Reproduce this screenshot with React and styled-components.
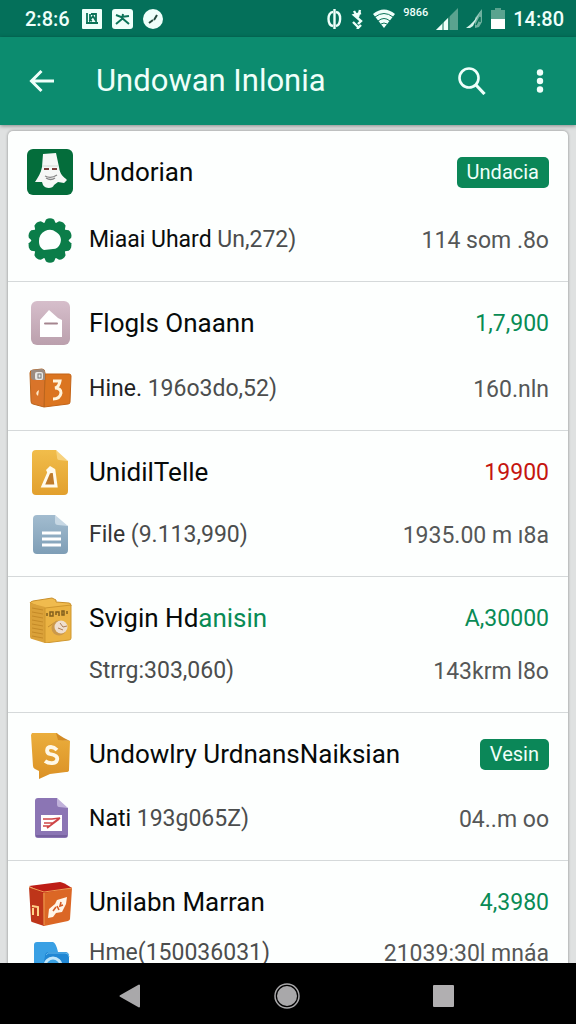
import styled, { createGlobalStyle } from "styled-components";

const GlobalStyle = createGlobalStyle`
  * {
    box-sizing: border-box;
  }

  body {
    margin: 0;
    background: #000;
    font-family: Roboto, "Liberation Sans", sans-serif;
  }

  button {
    border: 0;
    padding: 0;
    background: none;
    color: inherit;
    font: inherit;
    cursor: pointer;
  }
`;

/* Status bar */

const StatusIcons = () => (
  <StatusGroup $gap={10}>
    <svg width="20" height="20" viewBox="0 0 20 20">
      <rect width="20" height="20" rx="1" fill="#effffa" />
      <path
        d="M5 4v10M4 14h12M8 5v6l3-4 3 5V5H9M7 11l3 1"
        fill="none"
        stroke="#0b7358"
        strokeWidth="1.8"
      />
    </svg>
    <svg width="21" height="20" viewBox="0 0 21 20">
      <rect width="21" height="20" rx="3" fill="#effffa" />
      <path
        d="M4 6l5 2 8-1M11 5l-1 5-6 5M10 9l7 6"
        fill="none"
        stroke="#0b7358"
        strokeWidth="2"
      />
    </svg>
    <svg width="20" height="20" viewBox="0 0 20 20">
      <circle cx="10" cy="10" r="10" fill="#effffa" />
      <path
        d="M14 6l-3 5M10 11l-4 3"
        fill="none"
        stroke="#24483c"
        strokeWidth="2"
      />
    </svg>
  </StatusGroup>
);

const SystemIcons = () => (
  <>
    <svg width="15" height="20" viewBox="0 0 15 20">
      <path
        d="M6 3C0 3 0 16 6 17M9 3c6 1 5 13 0 14M7.500 0v20"
        fill="none"
        stroke="#effffa"
        strokeWidth="2.400"
      />
    </svg>
    <svg width="15" height="20" viewBox="0 0 15 20">
      <path
        d="M11 4L4 6l7 6-3 3M4 2l3 5M10 1L8 8M3 13l5 5M7 20l4-4"
        fill="none"
        stroke="#effffa"
        strokeWidth="2.400"
      />
    </svg>
    <svg width="22" height="20" viewBox="0 0 22 20">
      <path d="M0 5Q11-4 22 5L11 19Z" fill="#effffa" />
      <path
        d="M2 8Q11 1 20 8M5 12Q11 7 17 12M8 15Q11 13 14 15"
        fill="none"
        stroke="#0b7358"
        strokeWidth="1"
      />
    </svg>
    <Carrier>9866</Carrier>
    <svg width="22" height="22" viewBox="0 0 22 22">
      <path d="M0 22L22 0v22Z" fill="#5aa38f" />
      <path d="M0 22L12 10v12Z" fill="#effffa" />
      <path d="M7 22V14M13 22V8" stroke="#0b7358" strokeWidth="1" />
    </svg>
    <svg width="17" height="21" viewBox="0 0 17 21">
      <path d="M16 1L9 10v10l4-1 3-5Z" fill="#6fb09f" />
      <path d="M0 20Q9 14 15 2L7 18 4 20Z" fill="#d5f2e9" />
      <path d="M10 17l4-8v5" fill="none" stroke="#0b7358" strokeWidth="1.500" />
    </svg>
    <svg width="14" height="21" viewBox="0 0 14 21">
      <path d="M4 0h6v2h4v9H0V2h4Z" fill="#5aa38f" />
      <path d="M0 11h14v10H0Z" fill="#fff" />
    </svg>
  </>
);

/* Row icons */

const IconBase = ({ children }) => (
  <svg width="46" height="50" viewBox="0 0 46 50" aria-hidden="true">
    {children}
  </svg>
);

const PortraitIcon = () => (
  <IconBase>
    <rect y="2" width="46" height="46" rx="6" fill="#046d3b" />
    <path
      d="M16 7l13-1 3 14c1 8 4 9 8 13l-3 3-6-1-4 3c-1 4-9 4-11 0l-1-3-7 0c3-5 6-9 7-15Z"
      fill="#f6f8f6"
    />
    <path d="M17 22h5M25 22h5" stroke="#7b3d3a" strokeWidth="2.200" />
    <path
      d="M18 29q6 3 12-1M19 31q5 3 9 0"
      fill="none"
      stroke="#858585"
      strokeWidth="1.300"
    />
    <path d="M15 19h16" stroke="#d3dad4" strokeWidth="1" />
  </IconBase>
);

const GearIcon = () => (
  <IconBase>
    {[0, 36, 72, 108, 144].map((angle) => (
      <path
        key={angle}
        d="M19 4.500Q23 2 27 4.500L30 11V40L27 46.500Q23 49 19 46.500L16 40V11Z"
        fill="#0b7d49"
        transform={`rotate(${angle} 23 25.500)`}
      />
    ))}
    <circle cx="23" cy="25.500" r="18.500" fill="#0b7d49" />
    <path
      d="M18 16q6-3 11 1c5 3 6 8 4 12q-2 5-7 5l-9 1c-4-2-5-5-5-9q0-7 6-10Z"
      fill="#fdfffe"
    />
  </IconBase>
);

const HouseIcon = () => (
  <IconBase>
    <defs>
      <linearGradient id="mauve" x2="0" y2="1">
        <stop stopColor="#d6becb" />
        <stop offset="1" stopColor="#bba0ad" />
      </linearGradient>
    </defs>
    <rect x="4" y="3" width="39" height="44" rx="6" fill="url(#mauve)" />
    <path d="M22 12l9 8 4 2v17H13V22Z" fill="#fff" />
    <path
      d="M18 25.500h12"
      stroke="#a5858f"
      strokeWidth="2"
      strokeLinecap="round"
    />
  </IconBase>
);

const FolderIcon = () => (
  <IconBase>
    <path
      d="M18 10l24 0q2 0 2 2l-1 26q0 2-2 2l-24 3Z"
      fill="#db7520"
      stroke="#c36316"
    />
    <path
      d="M3 9q0-3 3-3l9-1q3 0 3 4l-1 34-11-3q-2 0-2-3Z"
      fill="#d9742a"
      stroke="#ba651d"
    />
    <path d="M4 6l11-1q3 0 3 4v7H7q-3 0-3-3Z" fill="#9b8b80" />
    <rect x="8" y="8" width="8" height="8" rx="2" fill="#e9e8e5" />
    <rect x="11" y="10" width="3" height="4" fill="none" stroke="#777" />
    <path d="M12 26q-5 3-1 6Z" fill="#ffe9c8" />
    <path
      d="M26 17h7q-1 6-5 7 6 0 6 5-1 6-8 6"
      fill="none"
      stroke="#fff4db"
      strokeWidth="3"
    />
  </IconBase>
);

const NoteIcon = () => (
  <IconBase>
    <defs>
      <linearGradient id="amber" x2="0" y2="1">
        <stop stopColor="#f1bd4b" />
        <stop offset="1" stopColor="#e2a02d" />
      </linearGradient>
    </defs>
    <path
      d="M9 3h20l5 8 7 3v30q0 4-4 4H9q-4 0-4-4V7q0-4 4-4Z"
      fill="url(#amber)"
    />
    <path d="M29 3l12 11-9-1q-2 0-2-3Z" fill="#f7d27d" />
    <path d="M19 23l4-4 5 3v5h-7Z" fill="#fffbed" />
    <path
      d="M22 25l-6 14h13l-2-15Z"
      fill="#bf7b2b"
      stroke="#fffbed"
      strokeWidth="3"
    />
  </IconBase>
);

const DocumentIcon = () => (
  <IconBase>
    <defs>
      <linearGradient id="steel" x2="0" y2="1">
        <stop stopColor="#a2bccf" />
        <stop offset="1" stopColor="#7e9eb6" />
      </linearGradient>
    </defs>
    <path
      d="M10 5h18l4 7 9 4v24q0 4-4 4H10q-4 0-4-4V9q0-4 4-4Z"
      fill="url(#steel)"
    />
    <path d="M28 5l13 11-10-1q-3 0-3-3Z" fill="#c7d8e4" />
    <path d="M15 23h19M15 29h19M15 35h19" stroke="#fff" strokeWidth="2.800" />
  </IconBase>
);

const SafeIcon = () => (
  <IconBase>
    <path
      d="M3 10q0-1 3-2l19-3 4 2v2l13 1q2 0 2 3l-26 3Z"
      fill="#f0bb4e"
      stroke="#c98f2b"
    />
    <path d="M3 10l15 4v36L5 46q-2 0-2-3Z" fill="#daa139" />
    <path
      d="M5 15l11 2M5 19l11 2M5 23l11 2M5 27l11 2M5 31l11 2M5 35l11 2M5 39l11 2M5 43l11 2"
      stroke="#c58a27"
    />
    <path d="M18 15l26-3v33q0 2-2 2l-24 3Z" fill="#ebb343" stroke="#cf972f" />
    <path
      d="M20 23v-3M23 23v-4h3v4ZM29 22v-3h3v4M35 18v4h2v-4ZM40 18v3"
      fill="none"
      stroke="#83601e"
      strokeWidth="1.500"
    />
    <path d="M21 34l9-6" stroke="#c28b31" />
    <circle cx="32" cy="35" r="7.500" fill="#cb994b" />
    <circle cx="34" cy="34" r="6.500" fill="#efdfcf" />
    <path d="M33 30l3 4 4-1M31 35l5 2" fill="none" stroke="#ab7d5a" />
  </IconBase>
);

const SpeechIcon = () => (
  <IconBase>
    <defs>
      <linearGradient id="honey" x2="0" y2="1">
        <stop stopColor="#ebae3c" />
        <stop offset="1" stopColor="#db9125" />
      </linearGradient>
    </defs>
    <path
      d="M5 4h25l6 7 7 1-1 29q0 2-3 2l-16 2-11 5v-8l-4-2q-2-1-2-3L4 6Z"
      fill="url(#honey)"
    />
    <path d="M29 4l2 7 12 1-6-3Z" fill="#d28b25" />
    <path
      d="M30 21q-3-3-6-3c-5 0-5 6-1 7 6 1 8 3 7 6-1 4-8 4-12 1"
      fill="none"
      stroke="#fff8e7"
      strokeWidth="3.800"
    />
  </IconBase>
);

const SlideIcon = () => (
  <IconBase>
    <path
      d="M11 4h19l4 7 7 3v27q0 3-3 3H11q-3 0-3-3V7q0-3 3-3Z"
      fill="#8b75b4"
    />
    <path d="M30 4l11 10-9-1q-2 0-2-3Z" fill="#c0b1da" />
    <path d="M9 42h31" stroke="#76619f" strokeWidth="2" />
    <rect x="14" y="21" width="21" height="16" fill="#fff" />
    <path
      d="M16 25h9l8-1M17 29h9l7-5M20 34l12-9M16 32h7"
      fill="none"
      stroke="#cf4547"
      strokeWidth="1.600"
    />
  </IconBase>
);

const CubeIcon = () => (
  <IconBase>
    <path d="M2 10l15 5v34L5 45q-1 0-1-2Z" fill="#be3519" />
    <path d="M16 15l29-4-2 31q0 1-2 2l-24 5Z" fill="#db6725" />
    <path d="M2 9l31-4q3 0 12 6l-29 5Z" fill="#bd1d15" />
    <path d="M2 10l15 5 28-4M17 16v32" fill="none" stroke="#ed9b50" />
    <path d="M5 29l6 1v9M6 31v7" fill="none" stroke="#ffd389" strokeWidth="2" />
    <path
      d="M21 41l1-9 6-5 2-4 10-3-1 7-4 8-6 1-3 4Z"
      fill="#fff5e8"
    />
    <path
      d="M26 34l3-4M30 29l2 4M34 25l-1 4 3-1"
      fill="none"
      stroke="#d45c25"
      strokeWidth="1.600"
    />
  </IconBase>
);

const SearchFolderIcon = () => (
  <IconBase>
    <path d="M10 14h16q3 1 5 10l-4 26H7V17q0-3 3-3Z" fill="#39a0e4" />
    <path d="M22 24h16q4 0 4 4v22H14l4-22q0-4 4-4Z" fill="#2087d4" />
    <path d="M19 27q2-3 5-2h14q4 0 4 4" fill="none" stroke="#63b9ed" />
    <circle
      cx="26"
      cy="38"
      r="8"
      fill="#3aa1e3"
      stroke="#c2e7fb"
      strokeWidth="3"
    />
  </IconBase>
);

const records = [
  {
    gap: 18,
    icon: <PortraitIcon />,
    title: "Undorian",
    badge: "Undacia",
    detailIcon: <GearIcon />,
    lead: "Miaai Uhard",
    detail: " Un,272)",
    amount: "114 som .8o",
  },
  {
    gap: 16,
    icon: <HouseIcon />,
    title: "Flogls Onaann",
    total: "1,7,900",
    detailIcon: <FolderIcon />,
    leadTone: "#222",
    lead: "Hine.",
    detail: " 196o3do,52)",
    amount: "160.nln",
  },
  {
    gap: 13,
    icon: <NoteIcon />,
    title: "UnidilTelle",
    total: "19900",
    tone: "#c5150f",
    detailIcon: <DocumentIcon />,
    leadTone: "#333",
    lead: "File",
    detail: " (9.113,990)",
    amount: "1935.00 m ı8a",
  },
  {
    gap: 3,
    icon: <SafeIcon />,
    title: "Svigin Hd",
    highlight: "anisin",
    total: "A,30000",
    detail: "Strrg:303,060)",
    amount: "143krm l8o",
  },
  {
    gap: 15,
    icon: <SpeechIcon />,
    title: "Undowlry UrdnansNaiksian",
    badge: "Vesin",
    detailIcon: <SlideIcon />,
    lead: "Nati",
    detail: " 193g065Z)",
    amount: "04..m oo",
  },
  {
    gap: 1,
    icon: <CubeIcon />,
    title: "Unilabn Marran",
    total: "4,3980",
    detailIcon: <SearchFolderIcon />,
    detail: "Hme(150036031)",
    amount: "21039:30l mnáa",
  },
];

const Record = ({ record }) => (
  <RecordItem $gap={record.gap}>
    <Row>
      <IconSlot>{record.icon}</IconSlot>
      <RecordTitle>
        {record.title}
        {record.highlight && <Highlight>{record.highlight}</Highlight>}
      </RecordTitle>
      {record.badge ? (
        <Badge>{record.badge}</Badge>
      ) : (
        <Total $tone={record.tone}>{record.total}</Total>
      )}
    </Row>
    <Row>
      <IconSlot>{record.detailIcon}</IconSlot>
      <Detail>
        {record.lead && <Lead $tone={record.leadTone}>{record.lead}</Lead>}
        {record.detail}
      </Detail>
      <Amount>{record.amount}</Amount>
    </Row>
  </RecordItem>
);

export default function App() {
  return (
    <Screen>
      <GlobalStyle />
      <StatusBar>
        <StatusGroup $gap={12}>
          <Clock>2:8:6</Clock>
          <StatusIcons />
        </StatusGroup>
        <StatusGroup $gap={8}>
          <SystemIcons />
          <Clock>14:80</Clock>
        </StatusGroup>
      </StatusBar>

      <AppBar>
        <IconButton aria-label="Back">
          <svg width="26" height="24" viewBox="0 0 26 24">
            <path
              d="M25 12H3M12.500 2L2.500 12l10 10"
              fill="none"
              stroke="#effffa"
              strokeWidth="3"
            />
          </svg>
        </IconButton>
        <AppTitle>Undowan Inlonia</AppTitle>
        <IconButton aria-label="Search">
          <svg width="28" height="28" viewBox="0 0 28 28">
            <circle
              cx="11"
              cy="11"
              r="9.500"
              fill="none"
              stroke="#effffa"
              strokeWidth="2.600"
            />
            <path d="M17.500 17.500L26.500 27" stroke="#effffa" strokeWidth="3.200" />
          </svg>
        </IconButton>
        <IconButton aria-label="More options">
          <svg width="8" height="24" viewBox="0 0 8 24">
            <circle cx="4" cy="3.500" r="3.200" fill="#effffa" />
            <circle cx="4" cy="12" r="3.200" fill="#effffa" />
            <circle cx="4" cy="20.500" r="3.200" fill="#effffa" />
          </svg>
        </IconButton>
      </AppBar>

      <Content>
        <Card>
          {records.map((record) => (
            <Record key={record.title} record={record} />
          ))}
        </Card>
      </Content>

      <NavBar>
        <NavButton aria-label="Go back">
          <svg width="22" height="24" viewBox="0 0 22 24">
            <path
              d="M1.500 12L20 1.500v21Z"
              fill="#a9a8aa"
              stroke="#a9a8aa"
              strokeWidth="2"
              strokeLinejoin="round"
            />
          </svg>
        </NavButton>
        <NavButton aria-label="Home">
          <svg width="26" height="26" viewBox="0 0 26 26">
            <circle cx="13" cy="13" r="12" fill="none" stroke="#a9a8aa" strokeWidth="1.500" />
            <circle cx="13" cy="13" r="10" fill="#a9a8aa" />
          </svg>
        </NavButton>
        <NavButton aria-label="Recent apps">
          <svg width="22" height="22" viewBox="0 0 22 22">
            <rect width="21" height="22" rx="1" fill="#b1afb1" />
          </svg>
        </NavButton>
      </NavBar>
    </Screen>
  );
}

const Screen = styled.div`
  display: flex;
  flex-direction: column;
  height: 100vh;
  background: #dfe1e1;
`;

const StatusBar = styled.div`
  display: flex;
  flex: none;
  justify-content: space-between;
  align-items: center;
  height: 37px;
  padding: 0 12px 0 25px;
  background: #04705a;
  color: #effffa;
`;

const StatusGroup = styled.div`
  display: flex;
  align-items: center;
  gap: ${({ $gap }) => $gap}px;
`;

const Clock = styled.span`
  font-size: 20px;
  font-weight: 500;
`;

const Carrier = styled.span`
  align-self: flex-start;
  font-size: 11px;
  font-weight: 500;
  line-height: 12px;
`;

const AppBar = styled.header`
  position: relative;
  z-index: 1;
  display: flex;
  flex: none;
  align-items: center;
  height: 88px;
  padding: 0 12px 0 18px;
  background: #0c8c6f;
  color: #effffa;
  box-shadow: 0 1px 4px rgba(0, 0, 0, 0.4);
`;

const IconButton = styled.button`
  display: flex;
  flex: none;
  justify-content: center;
  align-items: center;
  width: 48px;
  height: 48px;

  & + & {
    margin-left: 20px;
  }
`;

const AppTitle = styled.h1`
  flex: 1;
  margin: 0 0 0 30px;
  font-size: 31px;
  font-weight: 400;
  line-height: 40px;
  white-space: nowrap;
`;

const Content = styled.main`
  flex: 1;
  min-height: 0;
  padding: 6px 8px 0;
  overflow-y: auto;
  scrollbar-width: none;
`;

const Card = styled.ul`
  margin: 0;
  padding: 0;
  border-radius: 5px;
  background: #fdfffe;
  box-shadow: 0 0 3px rgba(0, 0, 0, 0.4);
  list-style: none;
`;

const RecordItem = styled.li`
  display: flex;
  flex-direction: column;
  gap: ${({ $gap }) => $gap}px;
  padding: 16px 19px;

  & + & {
    border-top: 1px solid #d5d9da;
  }
`;

const Row = styled.div`
  display: flex;
  align-items: center;
  height: 50px;
  white-space: nowrap;
`;

const IconSlot = styled.div`
  display: flex;
  flex: none;
  width: 46px;
  margin-right: 16px;
`;

const RecordTitle = styled.h2`
  flex: 1;
  margin: 0;
  color: #070a09;
  font-size: 26px;
  font-weight: 400;
  line-height: 32px;
`;

const Highlight = styled.span`
  color: #098b55;
`;

const Detail = styled.p`
  flex: 1;
  margin: 0;
  color: #4b4d4d;
  font-size: 23px;
  line-height: 32px;
`;

const Lead = styled.span`
  color: ${({ $tone }) => $tone || "#0a0d0c"};
`;

const Total = styled.span`
  color: ${({ $tone }) => $tone || "#098b55"};
  font-size: 23px;
`;

const Amount = styled.span`
  color: #555757;
  font-size: 23px;
`;

const Badge = styled.span`
  padding: 0 10px;
  border-radius: 5px;
  background: #0b8758;
  color: #effffa;
  font-size: 20px;
  line-height: 31px;
`;

const NavBar = styled.nav`
  display: grid;
  flex: none;
  grid-template-columns: repeat(3, 1fr);
  height: 61px;
  padding: 4px 53px 0 51px;
  background: #000;
`;

const NavButton = styled.button`
  display: flex;
  justify-content: center;
  align-items: center;
`;
